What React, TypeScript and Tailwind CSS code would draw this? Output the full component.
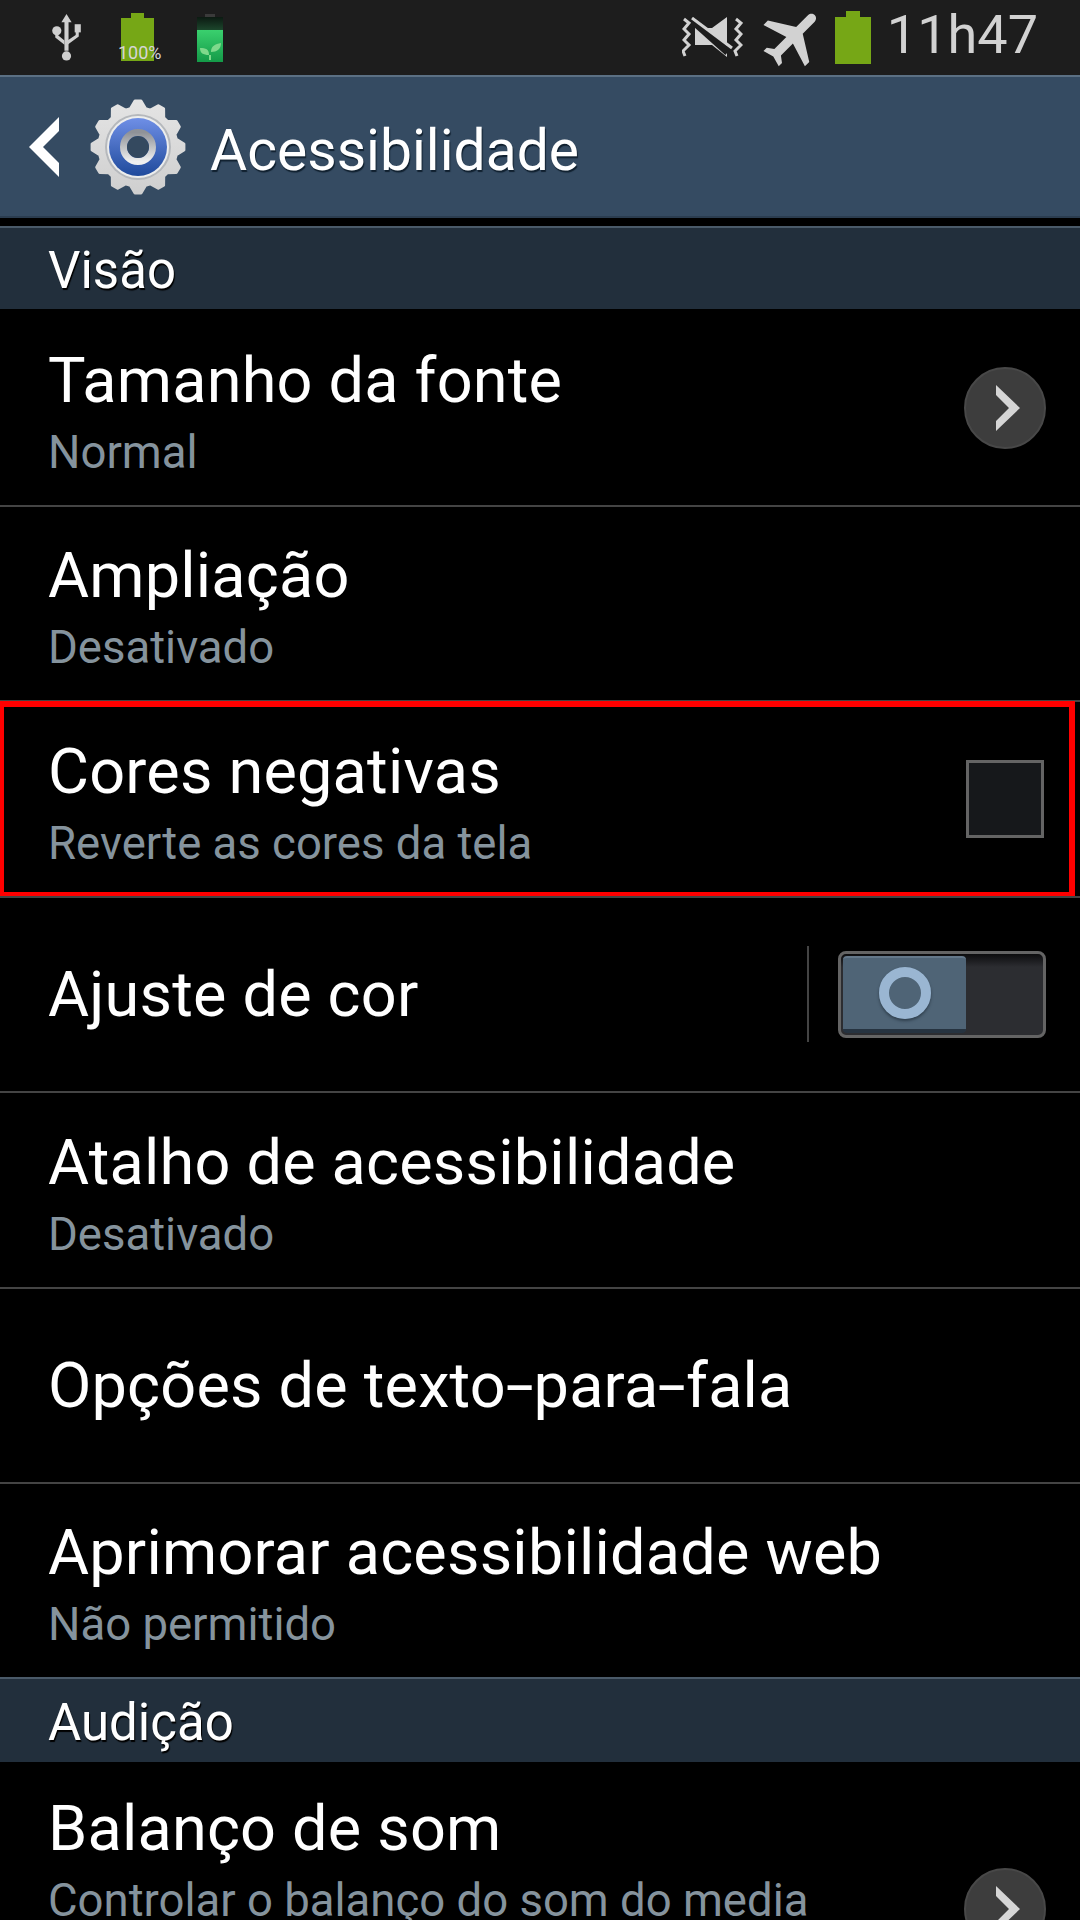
const gearPoints = Array.from({ length: 48 }, (_, i) => {
  // 12 teeth, four points each
  const radii = [46, 46, 39, 39];
  const a = ((i - 0.5) * 7.5 * Math.PI) / 180 - Math.PI / 2;
  const r = radii[i % 4];
  return `${(50 + r * Math.cos(a)).toFixed(1)},${(50 + r * Math.sin(a)).toFixed(1)}`;
}).join(" ");

function GearIcon() {
  return (
    <svg viewBox="0 0 100 100" className="w-[100px] h-[100px]">
      <defs>
        <linearGradient id="blue" x1="0" y1="0" x2="0" y2="1">
          <stop offset="0" stopColor="#6f8fe6" />
          <stop offset="1" stopColor="#1f4a9c" />
        </linearGradient>
        <linearGradient id="silver" x1="0" y1="0" x2="0" y2="1">
          <stop offset="0" stopColor="#8f9298" />
          <stop offset="1" stopColor="#f0f0f0" />
        </linearGradient>
        <linearGradient id="metal" x1="0" y1="0" x2="0" y2="1">
          <stop offset="0" stopColor="#e4e4e4" />
          <stop offset="1" stopColor="#cfcfcf" />
        </linearGradient>
      </defs>
      <polygon points={gearPoints} fill="url(#metal)" stroke="url(#metal)" strokeWidth="3" strokeLinejoin="round" />
      <circle cx="50" cy="50" r="33" fill="#b5b8bc" />
      <circle cx="50" cy="50" r="31" fill="#eceded" />
      <circle cx="50" cy="50" r="29" fill="url(#blue)" />
      <circle cx="50" cy="50" r="14.5" fill="none" stroke="url(#silver)" strokeWidth="7" />
      <circle cx="50" cy="50" r="11" fill="#34495f" />
    </svg>
  );
}

function UsbIcon() {
  return (
    <svg viewBox="0 0 28 46" className="w-[29px] h-[47px]" fill="#cfcfcf">
      <polygon points="14,0 19,8 16,8 16,36 12,36 12,8 9,8" />
      <circle cx="14" cy="41" r="4.5" />
      <circle cx="4.5" cy="16.5" r="4.5" />
      <rect x="22" y="10" width="6" height="8" />
      <path d="M3 19v4l9 7v-4l-6-5v-2zM23 17h3v5l-11 8v-4l8-5.500z" />
    </svg>
  );
}

function SimBattery() {
  return (
    <div className="relative w-[33px] h-[48px] mt-[-1px]">
      <svg viewBox="0 0 33 48" className="w-[33px] h-[48px]" fill="#76a716">
        <rect x="10" y="0" width="13" height="6" />
        <rect x="0" y="5" width="33" height="43" />
      </svg>
      <span className="absolute left-[-3px] bottom-[-1px] text-[18px] leading-[18px] text-[#d6d6d6] font-['Roboto',sans-serif]">100%</span>
    </div>
  );
}

function LeafBattery() {
  return (
    <svg viewBox="0 0 26 48" className="w-[26px] h-[48px]">
      <defs>
        <linearGradient id="cell" x1="0" y1="0" x2="0" y2="1">
          <stop offset="0" stopColor="#3ad06e" />
          <stop offset="1" stopColor="#149a48" />
        </linearGradient>
        <linearGradient id="empty" x1="0" y1="0" x2="0" y2="1">
          <stop offset="0" stopColor="#0c1a12" />
          <stop offset="1" stopColor="#1d4a2e" />
        </linearGradient>
      </defs>
      <rect x="8" y="0" width="10" height="3" fill="#3a3a3a" />
      <rect x="0" y="3" width="26" height="14" fill="url(#empty)" />
      <rect x="0" y="16" width="26" height="32" fill="url(#cell)" />
      <path d="M12 41c0-6-3-7-9-7 0 5 3 7 9 7zM14 38c0-6 4-8 10-9 0 6-4 9-10 9zM12 41h2v5h-2z" fill="#7fd98c" />
    </svg>
  );
}

function MuteIcon() {
  return (
    <svg viewBox="0 0 61 40" className="w-[61px] h-[40px]" fill="#d2d2d2">
      <polygon points="13,11 30,11 45,0 45,40 30,28 13,28" />
      <path d="M8 1 L46 35" stroke="#1d1d1d" strokeWidth="8" />
      <path d="M10 1 L50 31" stroke="#d2d2d2" strokeWidth="3" />
      <path d="M2 2 L7 6 L2 12 L7 17 L2 23 L7 28 L1 34 L3 39" fill="none" stroke="#d2d2d2" strokeWidth="3" />
      <path d="M54 2 L59 6 L54 12 L59 17 L54 23 L59 28 L53 34 L55 39" fill="none" stroke="#d2d2d2" strokeWidth="3" />
    </svg>
  );
}

function PlaneIcon() {
  return (
    <svg viewBox="0 0 24 24" className="w-[74px] h-[74px] rotate-45" fill="#d2d2d2">
      <path d="M21 16v-2l-8-5V3.500c0-.83-.67-1.500-1.500-1.500S10 2.670 10 3.500V9l-8 5v2l8-2.500V19l-2 1.500V22l3.500-1 3.500 1v-1.500L13 19v-5.500l8 2.500z" />
    </svg>
  );
}

function StatusBar() {
  return (
    <div className="h-[75px] bg-[#1d1d1d] flex items-start justify-between">
      <div className="flex items-start pl-[52px] pt-[14px]">
        <UsbIcon />
        <div className="ml-[40px]">
          <SimBattery />
        </div>
        <div className="ml-[43px]">
          <LeafBattery />
        </div>
      </div>
      <div className="flex items-start pr-[42px]">
        <div className="mt-[17px]">
          <MuteIcon />
        </div>
        <div className="ml-[14px] mt-[1px]">
          <PlaneIcon />
        </div>
        <svg viewBox="0 0 36 53" className="w-[36px] h-[53px] mt-[11px] ml-[4px]" fill="#76a716">
          <rect x="11" y="0" width="14" height="7" />
          <rect x="0" y="6" width="36" height="47" />
        </svg>
        <span className="ml-[16px] text-[54px] leading-[70px] font-normal text-[#d2d2d2] font-['Roboto',sans-serif]">11h47</span>
      </div>
    </div>
  );
}

function Header() {
  return (
    <div className="h-[143px] bg-[#354b62] border-t-2 border-t-[#5b7084] border-b-2 border-b-[#2b3d50] flex items-center">
      <svg viewBox="0 0 30 60" className="w-[32px] h-[60px] ml-[28px]" fill="#ffffff">
        <polygon points="30,0 30,14 14,30 30,46 30,60 0,30" />
      </svg>
      <div className="ml-[28px]">
        <GearIcon />
      </div>
      <span className="ml-[22px] mt-[8px] text-[57px] text-white font-['Roboto',sans-serif] [text-shadow:1px_2px_1px_#10202f]">Acessibilidade</span>
    </div>
  );
}

function SectionHeader({ title, className }: { title: string; className: string }) {
  return (
    <div className={`bg-[#222f3c] border-t-2 border-t-[#4a5a69] flex items-center pl-[48px] ${className}`}>
      <span className="mt-[5px] text-[51px] text-white font-['Roboto',sans-serif] [text-shadow:1px_2px_1px_#000000]">{title}</span>
    </div>
  );
}

function ChevronButton() {
  return (
    <div className="w-[82px] h-[82px] rounded-full bg-[#3d3d3d] border-2 border-[#484848] flex items-center justify-center">
      <svg viewBox="0 0 24 46" className="w-[24px] h-[46px] ml-[6px]" fill="#d6d6d6">
        <polygon points="0,0 24,23 0,46 0,36 13,23 0,10" />
      </svg>
    </div>
  );
}

function Checkbox() {
  return <div className="mr-[2px] w-[78px] h-[78px] bg-[#16181b] border-[3px] border-[#646464]" />;
}

function Toggle() {
  return (
    <div className="flex items-center">
      <div className="w-[2px] h-[96px] bg-[#444444]" />
      <div className="ml-[29px] w-[208px] h-[87px] rounded-[8px] border-[3px] border-[#646464] bg-[linear-gradient(#0c0c0e,#2c2d31_16%)] p-[2px]">
        <div className="w-[123px] h-full rounded-[4px] bg-[#4f6476] border-t-2 border-t-[#64788a] border-b-[4px] border-b-[#263340] flex items-center justify-center">
          <div className="w-[52px] h-[52px] rounded-full border-[10px] border-[#9ab6d2] shadow-[0_2px_3px_#2f3f4d]" />
        </div>
      </div>
    </div>
  );
}

function Hyphen() {
  return <span className="inline-block mx-[5px] scale-x-[1.6]">-</span>;
}

type RowProps = {
  title: React.ReactNode;
  sub?: string;
  right?: React.ReactNode;
  highlighted?: boolean;
  first?: boolean;
  tall?: boolean;
};

function Row({ title, sub, right, highlighted, first, tall }: RowProps) {
  return (
    <div className={`relative pl-[48px] pr-[34px] flex items-center justify-between border-t-2 ${tall ? "h-[292px]" : "h-[195.43px]"} ${first ? "border-t-transparent" : "border-t-[#444444]"}`}>
      <div className={`flex flex-col font-['Roboto',sans-serif] ${sub ? "self-start" : "mt-[2px]"} ${tall ? "pt-[29px]" : sub ? "pt-[33.5px]" : ""}`}>
        <span className="text-[63px] leading-[72px] tracking-[0.2px] text-white">{title}</span>
        {sub && <span className="mt-[11px] text-[45.5px] leading-[50px] text-[#85939d]">{sub}</span>}
      </div>
      {right}
      {highlighted && <div className="absolute left-[-2px] top-[-1.4px] bottom-[-2px] right-[5px] border-[6px] border-[#ff0000]" />}
    </div>
  );
}

export default function App() {
  return (
    <div className="w-[1080px] h-[1920px] overflow-hidden bg-black">
      <StatusBar />
      <Header />
      <div className="h-[8px] bg-black" />
      <SectionHeader title="Visão" className="h-[83.4px]" />
      <Row title="Tamanho da fonte" sub="Normal" right={<ChevronButton />} first />
      <Row title="Ampliação" sub="Desativado" />
      <Row title="Cores negativas" sub="Reverte as cores da tela" right={<Checkbox />} highlighted />
      <Row title="Ajuste de cor" right={<Toggle />} />
      <Row title="Atalho de acessibilidade" sub="Desativado" />
      <Row title={<>Opções de texto<Hyphen />para<Hyphen />fala</>} />
      <Row title="Aprimorar acessibilidade web" sub="Não permitido" />
      <SectionHeader title="Audição" className="h-[84.6px] pt-[0.6px]" />
      <Row title="Balanço de som" sub="Controlar o balanço do som do media" right={<ChevronButton />} first tall />
    </div>
  );
}
